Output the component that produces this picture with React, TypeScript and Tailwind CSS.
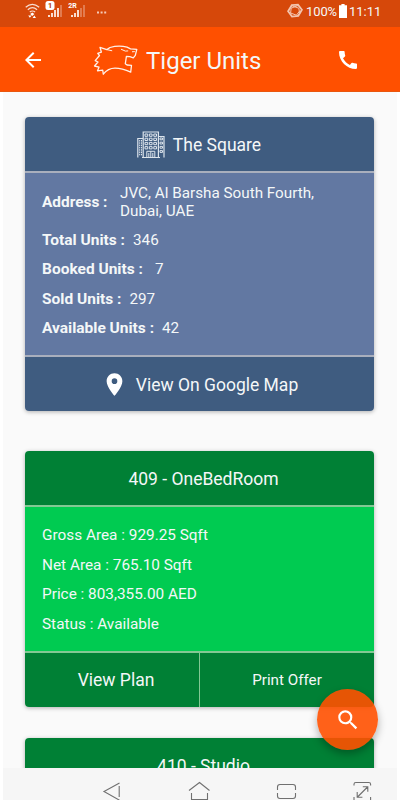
import type { ReactNode } from 'react'
import { MdArrowBack, MdCall, MdLocationOn, MdSearch } from 'react-icons/md'

const stats = [
  { label: 'Total Units :', value: '346', gap: 'ml-2' },
  { label: 'Booked Units :', value: '7', gap: 'ml-3' },
  { label: 'Sold Units :', value: '297', gap: 'ml-2' },
  { label: 'Available Units :', value: '42', gap: 'ml-2' },
]

const details = [
  'Gross Area : 929.25 Sqft',
  'Net Area : 765.10 Sqft',
  'Price : 803,355.00 AED',
  'Status : Available',
]

const App = () => {
  return (
    <div className="relative flex h-[800px] w-[400px] flex-col overflow-hidden bg-white font-['Roboto','Noto_Sans',sans-serif] text-[#f4f7f8]">
      <StatusBar />
      <header className="flex h-[65px] shrink-0 items-center border-b border-[#e9570f] bg-[#ff5000] pt-[2px] pl-[21px]">
        <MdArrowBack className="h-6 w-6 text-white" />
        <TigerLogo />
        <h1 className="ml-[8px] w-[190px] pt-[2px] text-[24px] leading-8">Tiger Units</h1>
        <MdCall className="h-6 w-6 text-white" />
      </header>

      <main className="mx-[3px] h-[676px] shrink-0 overflow-hidden bg-[#fafafa] px-[22px] pt-[25px]">
        <Card>
          <div className="flex h-[54px] items-center justify-center bg-[#3f5c80] pt-px pr-px text-[17.5px]">
            <Building />
            <span className="ml-2 pt-px">The Square</span>
          </div>
          <div className="h-[186px] border-y-2 border-[#a9afbd] bg-[#6278a2] px-[17px] pt-[10.5px] text-[15.25px]">
            <div className="flex items-center leading-[18px]">
              <b className="w-[78px] text-[15.4px]">Address :</b>
              <span>
                JVC, Al Barsha South Fourth,
                <br />
                Dubai, UAE
              </span>
            </div>
            <div className="mt-[6px]">
              {stats.map((s) => (
                <div key={s.label} className="flex h-[29.5px] items-center">
                  <b className="text-[15.5px]">{s.label}</b>
                  <span className={s.gap}>{s.value}</span>
                </div>
              ))}
            </div>
          </div>
          <div className="flex h-[54px] items-center justify-center bg-[#3f5c80] text-[17.5px]">
            <MdLocationOn className="h-[27px] w-[27px] text-white" />
            <span className="ml-[8px] pt-[2px]">View On Google Map</span>
          </div>
        </Card>

        <Card className="mt-[40px]">
          <CardTitle>409 - OneBedRoom</CardTitle>
          <div className="h-[148px] border-y-2 border-[#83c894] bg-[#00cb51] px-[17px] pt-[14px] text-[15.35px]">
            {details.map((line) => (
              <div key={line} className="flex h-[29.5px] items-center">
                {line}
              </div>
            ))}
          </div>
          <div className="flex h-[54px] bg-[#008035]">
            <button className="w-[175px] border-r border-[#83c894] pt-px pl-[8px] text-[17.5px]">View Plan</button>
            <button className="flex-1 pt-px text-[15.2px]">Print Offer</button>
          </div>
        </Card>

        <Card className="mt-[31px]">
          <CardTitle>410 - Studio</CardTitle>
        </Card>
      </main>

      <NavBar />

      <button className="absolute top-[689px] left-[317px] flex h-[61px] w-[61px] items-center justify-center rounded-full bg-[#ff5000]/90 shadow-[0_4px_8px_rgba(0,0,0,0.3)]">
        <MdSearch className="h-[26px] w-[26px] text-white" />
      </button>
    </div>
  )
}

function Card({ children, className = '' }: { children: ReactNode; className?: string }) {
  return (
    <section className={`w-[349px] overflow-hidden rounded-[4px] shadow-[0_1px_4px_rgba(0,0,0,0.3)] ${className}`}>
      {children}
    </section>
  )
}

function CardTitle({ children }: { children: ReactNode }) {
  return <div className="flex h-[54px] items-center justify-center bg-[#008035] pt-[2px] pl-[8px] text-[17.5px]">{children}</div>
}

function StatusBar() {
  return (
    <div className="flex h-[27px] shrink-0 items-start bg-[#d6480a] pl-[25px]">
      <svg className="mt-[3px] h-4 w-[15px]" viewBox="0 0 15 16" fill="none" stroke="#f9ddd0" strokeWidth="1.2">
        <path d="M.7 4.3Q7.3-1.7 14.2 4.3M2.8 6.7q4.6-4 9.3 0M4.8 9q2.6-2 5.3 0" />
        <path d="m5.2 11 2-1.5 2.2 1.5-2.1 2Z M3.2 12.6h3.4l-1.7 2.2Z M7.6 15.1h3.4l-1.7-2.7Z" fill="#fff" stroke="none" />
      </svg>
      <Signal label="1" />
      <Signal label="2R" />
      <svg className="mt-[10px] ml-[11px] h-[5px] w-[10px]" viewBox="0 0 10 5" fill="#f5c9b6">
        <path d="M0 1.5h2v2H0zM3.6 1.5h2v2h-2zM7.2 1.5h2v2h-2z" />
      </svg>
      <svg className="mt-[3px] ml-[180px] h-4 w-4" viewBox="0 0 16 16" fill="none" stroke="#f3c4ae">
        <path d="M4.8 2.2 11 1.6l3.9 5.2-3.6 6.2-6.3.6L1.1 8.2Z" strokeWidth="1.8" />
        <path d="m5.2 2.9 6.6 2.3.9 5.3-3.3 3M11 2.5 4.2 5.2 3.6 10l5.8 2.2 3.4-4.4" strokeWidth="1" />
      </svg>
      <span className="ml-[3px] w-[32px] text-[13px] leading-[24px] tracking-[-0.1px] whitespace-nowrap">100%</span>
      <svg className="mt-[4px] ml-px h-[14px] w-[8px]" viewBox="0 0 8 14" fill="#fff">
        <path d="M2.4 0h3.2v1.3H8V14H0V1.3h2.4z" />
      </svg>
      <span className="ml-[2px] text-[13px] leading-[24px]">11:11</span>
    </div>
  )
}

function Signal({ label }: { label: string }) {
  const boxed = label === '1'
  return (
    <svg className="ml-[5px] h-5 w-[18px]" viewBox="0 0 18 20" fill="#f9ddd0">
      <path d="M3 15h2v2H3zM6 13h2v4H6zM9 10h2v7H9z" />
      <path d="M12 8h2v9h-2z" opacity={boxed ? 1 : 0.35} />
      <path d="M15 5h2v12h-2z" opacity=".35" />
      {boxed && <rect x=".5" y="1" width="9" height="9" rx="2.5" fill="#fff" />}
      <text
        x={boxed ? 2.8 : 0.2}
        y={boxed ? 8.4 : 8.2}
        fontSize={boxed ? 8 : 7}
        fontWeight="700"
        fill={boxed ? '#b8420f' : '#fff'}
      >
        {label}
      </text>
    </svg>
  )
}

function TigerLogo() {
  return (
    <svg
      className="ml-[48px] h-[32px] w-[45px]"
      viewBox="0 0 45 32"
      fill="none"
      stroke="#fff1e9"
      strokeWidth="1.3"
      strokeLinejoin="round"
    >
      <path d="M7 3.4 13.8 5.6 17 3.5Q26 .8 34 3.2L37.5 4.8 43.8 5.4 42.3 11.3 40.3 13.8 36.8 12.6 33.4 12.4 32.3 19.8 34 21 38.5 21.3 37.7 28.2Q29 24.2 22 24.2T10.3 30.2L9.7 26.2 4.5 26.8 6 23.2 1.5 22 5 18 2.2 16.7 6.5 11.5 4.7 9.4 8.4 8.2Z" />
      <path d="m13.8 5.6 5.4 1.2M28 5.2l4.4 1.9 2.8-.2M39 7.8l2.8-.2" strokeWidth="1" />
    </svg>
  )
}

function Building() {
  const floors = [3, 7.2, 11.4, 15.6]
  return (
    <svg className="h-7 w-7" viewBox="0 0 28 28" fill="none" stroke="#dce4ec">
      <path d="M6.2 1h15.2v25.5H6.2zM.8 26.5V7.5h5.4M21.4 5.5H27v21M5 26.5h18" strokeWidth="1.2" />
      <path d="M2.7 9v16M4.5 9v16" strokeDasharray="1.5 .8" />
      {floors.map((y) => (
        <g key={y}>
          <path d={`M8 ${y}h2.7v2.3H8zM12.4 ${y}h2.7v2.3h-2.7zM16.8 ${y}h2.7v2.3h-2.7z`} />
          <path d={`M23 ${y + 4}h2.5v1.8H23z`} />
        </g>
      ))}
      <path d="M9.8 26.5v-6.2h8v6.2M13.8 20.3v6.2M11.8 22v4.5M15.8 22v4.5" />
    </svg>
  )
}

function NavBar() {
  return (
    <nav className="mx-[3px] h-8 shrink-0 bg-[#f6f6f6]">
      <svg className="h-8 w-[394px]" viewBox="3 0 394 32" fill="none" stroke="#707070" strokeWidth="1.1">
        <path d="M119.5 15 104 23.6l15.5 8.6M119.2 18v11" />
        <path d="m189 22.5 10.5-8 10 8M191.5 25v6.5h16V25" />
        <path d="M277.5 22v-3q0-2.5 2.5-2.5h13q2.5 0 2.5 2.5v3M277.5 25v3q0 2.5 2.5 2.5h13q2.5 0 2.5-2.5v-3" />
        <path d="M354 17.5v-1.2q0-1.8 1.8-1.8h13q1.8 0 1.8 1.8v1.2M354 29v3M370.6 29v3M357.5 29l10-10M362.8 18.7h5v5M357.2 24v5.2h5.2" />
      </svg>
    </nav>
  )
}

export default App
